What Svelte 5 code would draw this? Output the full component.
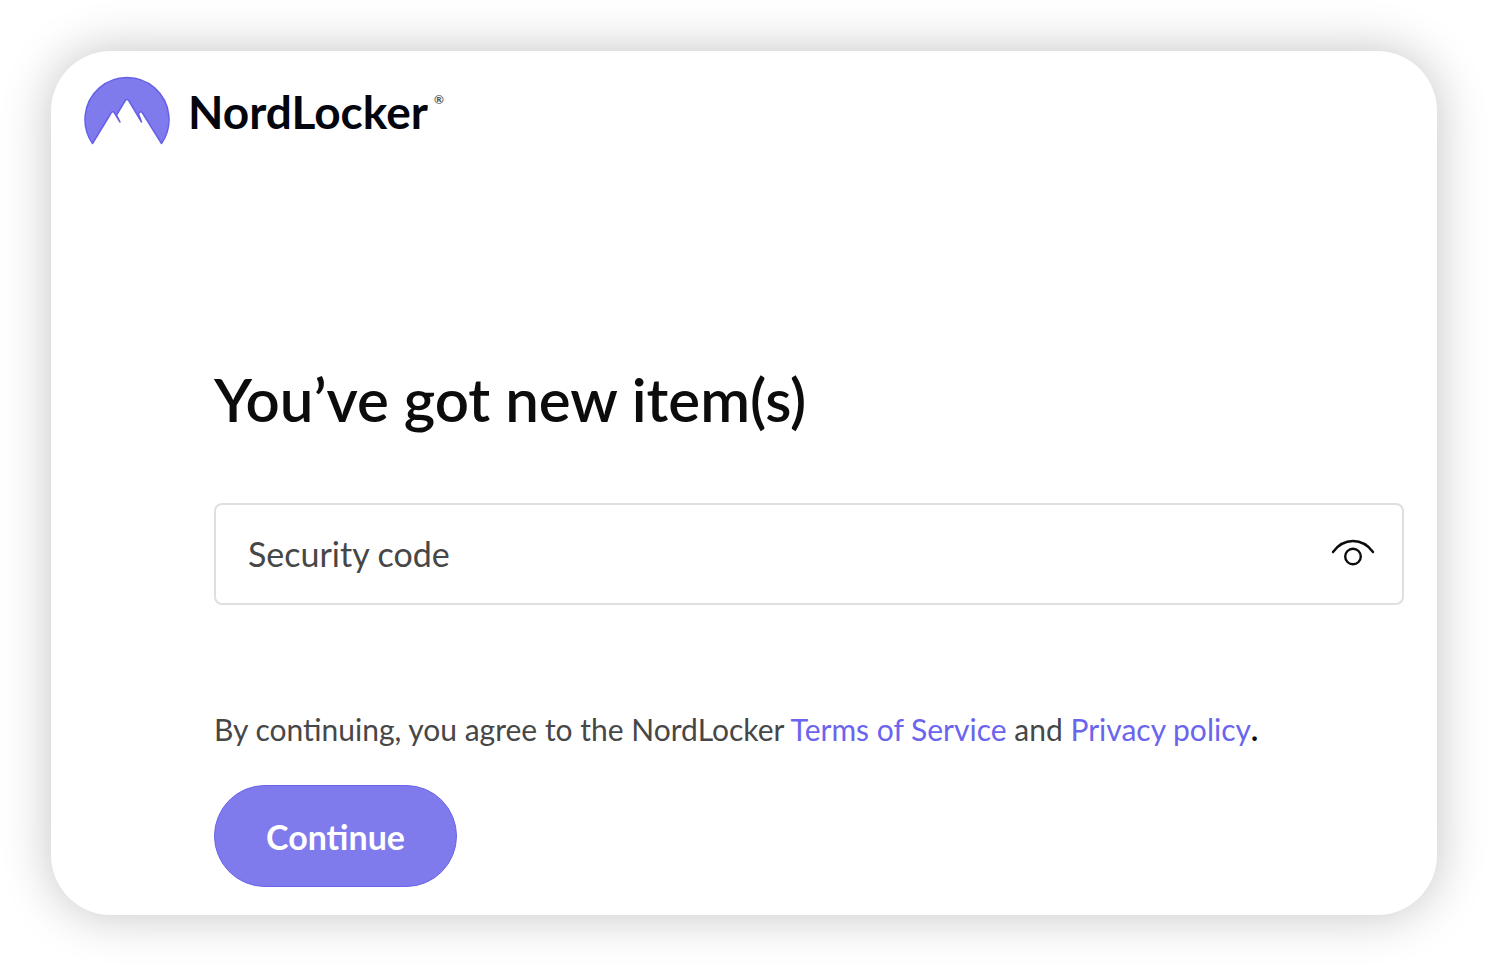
<script>
  let code = $state('');
  let visible = $state(false);

  const toggleCode = () => {
    visible = !visible;
  };
</script>

<main class="card">
  <header>
    <svg class="mark" viewBox="0 0 86 69" width="86" height="69" aria-hidden="true">
      <path
        d="M8.500 67.500A42 42 0 1 1 77.500 67.500L58.500 37Q56.500 34 54.500 38L57.500 46L45 25Q43 22 41 25L32.500 39L36 46L30.500 37Q28.500 34 26.500 38Z"
        fill="#807bed"
        stroke="#665fea"
        stroke-width="1.500"
        stroke-linejoin="round"
      />
    </svg>
    <span class="brand">NordLocker</span>
    <sup>®</sup>
  </header>

  <form onsubmit={(e) => e.preventDefault()}>
    <h1>You’ve got new item(s)</h1>

    <div class="field">
      <input
        type={visible ? 'text' : 'password'}
        placeholder="Security code"
        aria-label="Security code"
        bind:value={code}
      />
      <button class="eye" type="button" aria-label="Show security code" onclick={toggleCode}>
        <svg viewBox="0 0 44 28" width="44" height="28" fill="none" stroke="#0c0c0c" stroke-width="2.400">
          <path d="M2 13Q10 2 22 2T42 13" stroke-linecap="round" />
          <circle cx="22" cy="17.500" r="7.800" />
        </svg>
      </button>
    </div>

    <p class="terms">
      By continuing, you agree to the NordLocker <a href="#terms">Terms of Service</a> and
      <a href="#privacy">Privacy policy</a><b>.</b>
    </p>

    <button class="continue" type="submit">Continue</button>
  </form>
</main>

<style>
  :global(body) {
    margin: 0;
    background: #fff;
    font-family: Lato, 'Open Sans', sans-serif;
    color: #0c0c0c;
  }

  * {
    box-sizing: border-box;
  }

  .card {
    margin: 51px;
    padding: 25px 33px 28px;
    border-radius: 60px;
    background: #fff;
    box-shadow: 0 0 50px rgba(0, 0, 0, 0.24);
  }

  header {
    display: flex;
    align-items: flex-start;
  }

  .mark {
    display: block;
    margin-right: 18px;
  }

  .brand {
    font-size: 46px;
    font-weight: 700;
    line-height: 72px;
    color: #03050f;
  }

  sup {
    margin: 16px 0 0 6px;
    font-size: 12px;
    font-weight: 700;
    line-height: 16px;
    color: #555;
  }

  form {
    margin: 215px 0 0 130px;
  }

  h1 {
    margin: 0;
    font-size: 60px;
    font-weight: 600;
    line-height: 72px;
  }

  .field {
    display: flex;
    align-items: center;
    height: 102px;
    margin-top: 68px;
    padding: 0 27px 2px 32px;
    border: 2px solid #dfdfdf;
    border-radius: 8px;
  }

  input {
    flex: 1;
    min-width: 0;
    height: 100%;
    padding: 0;
    border: 0;
    outline: 0;
    background: none;
    font: 34px Lato, 'Open Sans', sans-serif;
    color: #0c0c0c;
  }

  input::placeholder {
    color: #474747;
    opacity: 1;
  }

  .eye {
    padding: 0;
    border: 0;
    background: none;
    cursor: pointer;
  }

  .eye svg {
    display: block;
  }

  .terms {
    margin: 104px 0 0;
    font-size: 30px;
    line-height: 40px;
    color: #474747;
  }

  .terms b {
    color: #0c0c0c;
  }

  a {
    color: #6a64ee;
    text-decoration: none;
  }

  .continue {
    height: 102px;
    margin-top: 36px;
    padding: 0 51px;
    border: 1px solid #6a64ea;
    border-radius: 51px;
    background: #807bed;
    font: 700 34px Lato, 'Open Sans', sans-serif;
    color: #fff;
    cursor: pointer;
  }
</style>
